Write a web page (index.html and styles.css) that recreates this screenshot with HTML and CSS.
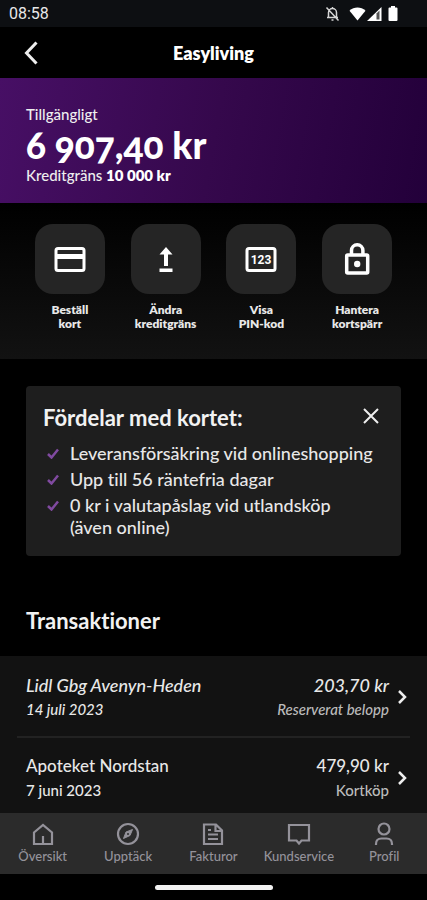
FILE: index.html
```html
<!DOCTYPE html>
<html lang="sv">
<head>
<meta charset="utf-8">
<meta name="viewport" content="width=device-width, initial-scale=1">
<title>Easyliving</title>
<link rel="stylesheet" href="styles.css">
</head>
<body>
<div class="app">
  <div class="status">
    <span class="clock">08:58</span>
    <div class="status-icons">
      <svg width="15" height="16" viewBox="0 0 15 16" fill="none" stroke="#d5d5d5" stroke-width="1.5"><path d="M3.500 11V6.500a4 4 0 0 1 8 0V11M2 11.600h11M7.500 1v2M6.500 14h2M1.500 1.500l12 13"/></svg>
      <svg width="17" height="14" viewBox="0 0 17 14" fill="#fff"><path d="M8.500 13.500L.5 3.800C5 -.5 12 -.5 16.500 3.800z"/></svg>
      <svg width="15" height="14" viewBox="0 0 15 14"><path d="M14.500 0v14H0z" fill="#fff"/><path d="M9.500 6.500l3-3v9h-3z" fill="#555"/></svg>
      <svg class="battery" width="10" height="15" viewBox="0 0 10 15" fill="#fff"><path d="M3 0h4v1.500h1.500q1 0 1 1V14q0 1-1 1h-7q-1 0-1-1V2.500q0-1 1-1H3z"/></svg>
    </div>
  </div>
  <header class="topbar">
    <button class="icon-button" aria-label="Tillbaka"><svg width="14" height="24" viewBox="0 0 14 24" fill="none" stroke="#eee" stroke-width="3"><path d="M12.500 1.500L2.500 12l10 10.500"/></svg></button>
    <h1 class="title">Easyliving</h1>
  </header>
  <section class="balance">
    <p class="line">Tillgängligt</p>
    <p class="amount">6 907,40 kr</p>
    <p class="line">Kreditgräns <strong>10 000 kr</strong></p>
  </section>
  <section class="actions">
    <button class="action">
      <span class="tile"><svg width="32" height="32" viewBox="0 0 32 32" fill="none" stroke="#fff" stroke-width="3"><rect x="2" y="5.500" width="28" height="22" rx="2"/><path d="M3 13.500h26" stroke-width="5"/></svg></span>
      <span>Beställ<br>kort</span>
    </button>
    <button class="action">
      <span class="tile"><svg width="32" height="32" viewBox="0 0 32 32" fill="#fff"><path d="M16 4l6.500 7.500h-4.500V23h-4V11.500H9.500zM9.500 25.500h13v3.500h-13z"/></svg></span>
      <span>Ändra<br>kreditgräns</span>
    </button>
    <button class="action">
      <span class="tile"><svg width="32" height="32" viewBox="0 0 32 32" fill="none" stroke="#fff" stroke-width="3"><rect x="2" y="5.500" width="28" height="22" rx="2"/><text class="pin" x="16" y="21" text-anchor="middle">123</text></svg></span>
      <span>Visa<br>PIN-kod</span>
    </button>
    <button class="action">
      <span class="tile"><svg width="32" height="36" viewBox="0 0 32 36" fill="none" stroke="#fff" stroke-width="3.500"><rect x="5.700" y="14" width="21" height="18" rx="1"/><path d="M10.500 14V9.500a5.700 5.700 0 0 1 11.400 0V14"/><circle cx="16.200" cy="23" r="3.200" fill="#fff" stroke="none"/></svg></span>
      <span>Hantera<br>kortspärr</span>
    </button>
  </section>
  <main class="content">
    <section class="card">
      <div class="card-head">
        <h2 class="heading">Fördelar med kortet:</h2>
        <button class="icon-button" aria-label="Stäng"><svg width="16" height="16" viewBox="0 0 16 16" fill="none" stroke="#eee" stroke-width="2"><path d="M1 1l14 14M15 1L1 15"/></svg></button>
      </div>
      <ul class="benefits">
        <li><svg class="check" width="12" height="11" viewBox="0 0 12 11"><path d="M1 6l3.500 3.500L11 1.500"/></svg><span>Leveransförsäkring vid onlineshopping</span></li>
        <li><svg class="check" width="12" height="11" viewBox="0 0 12 11"><path d="M1 6l3.500 3.500L11 1.500"/></svg><span>Upp till 56 räntefria dagar</span></li>
        <li><svg class="check" width="12" height="11" viewBox="0 0 12 11"><path d="M1 6l3.500 3.500L11 1.500"/></svg><span>0 kr i valutapåslag vid utlandsköp<br>(även online)</span></li>
      </ul>
    </section>
    <h2 class="heading section-title">Transaktioner</h2>
  </main>
  <section class="transactions">
    <a class="row pending" href="#lidl">
      <span class="cell"><span class="main">Lidl Gbg Avenyn-Heden</span><span class="sub">14 juli 2023</span></span>
      <span class="cell end"><span class="main">203,70 kr</span><span class="sub muted">Reserverat belopp</span></span>
      <svg width="10" height="14" viewBox="0 0 10 14" fill="none" stroke="#eee" stroke-width="2.500"><path d="M2 1l6 6-6 6"/></svg>
    </a>
    <a class="row" href="#apoteket">
      <span class="cell"><span class="main">Apoteket Nordstan</span><span class="sub">7 juni 2023</span></span>
      <span class="cell end"><span class="main">479,90 kr</span><span class="sub muted">Kortköp</span></span>
      <svg width="10" height="14" viewBox="0 0 10 14" fill="none" stroke="#eee" stroke-width="2.500"><path d="M2 1l6 6-6 6"/></svg>
    </a>
  </section>
  <nav class="tabs">
    <a href="#oversikt"><svg width="24" height="24" viewBox="0 0 24 24"><path d="M3 10.500L12 3l9 7.500V22H3zM12 22v-8"/></svg>Översikt</a>
    <a href="#upptack"><svg width="24" height="24" viewBox="0 0 24 24"><circle cx="12" cy="12" r="10"/><path d="M16.500 7.500l-2.500 6-6.500 3 2.500-6.500z" fill="#94929a" stroke-width="1"/><circle cx="12" cy="12" r="1" fill="#2b2b2b" stroke="none"/></svg>Upptäck</a>
    <a href="#fakturor"><svg width="24" height="24" viewBox="0 0 24 24"><path d="M3 2.500h12l6 6V22H3zM14.500 3v6H21M7 8h3M7 12.500h10M7 17h10"/></svg>Fakturor</a>
    <a href="#kundservice"><svg width="24" height="24" viewBox="0 0 24 24"><path d="M2 3h20v15.500h-7.500L12 21.500l-2.500-3H2z"/></svg>Kundservice</a>
    <a href="#profil"><svg width="24" height="24" viewBox="0 0 24 24"><circle cx="12" cy="7" r="5.500"/><path d="M4 23v-1q0-5.500 5.500-5.500h5Q20 16.500 20 22v1"/></svg>Profil</a>
  </nav>
  <div class="gesture"><span class="pill"></span></div>
</div>
</body>
</html>
```
FILE: styles.css
```css
* { box-sizing: border-box; }
body {
  margin: 0;
  background: #000;
  color: #e8e8e8;
  font-family: Lato, "Open Sans", sans-serif;
  font-weight: 500;
  font-variant-ligatures: none;
}
h1, h2, p, ul { margin: 0; padding: 0; }
svg { display: block; flex: none; }
button {
  padding: 0;
  border: 0;
  background: none;
  color: inherit;
  font: inherit;
}
a { color: inherit; text-decoration: none; }
.app {
  display: flex;
  flex-direction: column;
  min-height: 100vh;
}
.status {
  display: flex;
  justify-content: space-between;
  align-items: center;
  height: 27px;
  padding: 0 29px 0 9px;
  background: #0d0f12;
}
.clock { font: 16px/24px Roboto, sans-serif; }
.status-icons { display: flex; align-items: center; gap: 1px; }
.status-icons svg:first-child { margin-right: 8px; }
.battery { margin-left: 5px; }
.topbar {
  display: grid;
  grid-template-columns: 14px 1fr 14px;
  align-items: center;
  height: 51px;
  padding: 0 24px;
}
.title {
  color: #fff;
  font-size: 18px;
  font-weight: 800;
  line-height: 24px;
  text-align: center;
}
.balance {
  padding: 26px 26px 17px;
  background: linear-gradient(100deg, #470f65, #35084c 50%, #23003a);
  color: #eee;
}
.line { font-size: 15px; line-height: 21px; }
.line strong { font-weight: 800; color: #fff; }
.amount {
  color: #fff;
  font-size: 37px;
  font-weight: 900;
  font-variant-numeric: oldstyle-nums;
  line-height: 40px;
}
.actions {
  display: grid;
  grid-template-columns: repeat(4, 1fr);
  padding: 21px 22px 28px;
  background: linear-gradient(#000, #121212);
}
.action {
  display: flex;
  flex-direction: column;
  align-items: center;
  gap: 9px;
  font-size: 12px;
  font-weight: 800;
  line-height: 14px;
}
.tile {
  display: grid;
  place-items: center;
  width: 70px;
  height: 70px;
  border-radius: 18px;
  background: #252525;
}
.pin {
  fill: #fff;
  stroke: none;
  font: 700 12px Roboto, sans-serif;
}
.content { padding: 27px 26px 21px; }
.card {
  padding: 18px 17px;
  border-radius: 4px;
  background: #1e1e1e;
}
.card-head {
  display: flex;
  justify-content: space-between;
  align-items: center;
  padding-right: 5px;
}
.card-head .icon-button { padding-bottom: 4px; }
.heading {
  color: #f2f2f2;
  font-size: 22px;
  font-weight: 700;
  line-height: 28px;
}
.benefits {
  display: grid;
  gap: 4px;
  padding-top: 10px;
  list-style: none;
  font-size: 18px;
  line-height: 22px;
}
.benefits li { display: flex; gap: 11px; padding-left: 4px; }
.check {
  margin-top: 6px;
  fill: none;
  stroke: #804aa0;
  stroke-width: 2.5px;
}
.section-title { padding-top: 51px; }
.transactions {
  flex: 1;
  padding: 0 17px;
  background: #121212;
}
.row {
  display: flex;
  align-items: center;
  gap: 8px;
  padding: 17px 3px 16px 9px;
}
.row + .row { border-top: 2px solid #222; padding: 16px 3px 10px 9px; }
.pending { font-style: italic; }
.cell { display: grid; gap: 1px; }
.end { margin-left: auto; text-align: right; }
.main { font-size: 17px; line-height: 24px; }
.sub { font-size: 15px; line-height: 22px; }
.pending .main { font-size: 18px; }
.muted { color: #bbb; }
.tabs {
  display: grid;
  grid-template-columns: repeat(5, 1fr);
  background: #2b2b2b;
  color: #94929a;
  font-size: 13px;
  line-height: 16px;
}
.tabs a {
  display: flex;
  flex-direction: column;
  align-items: center;
  gap: 2px;
  padding: 9px 0 10px;
}
.tabs svg { fill: none; stroke: currentColor; stroke-width: 2.2px; }
.gesture { display: grid; flex: none; place-items: center; height: 26px; }
.pill {
  width: 118px;
  height: 5px;
  border-radius: 3px;
  background: #f2f2f2;
}
```
